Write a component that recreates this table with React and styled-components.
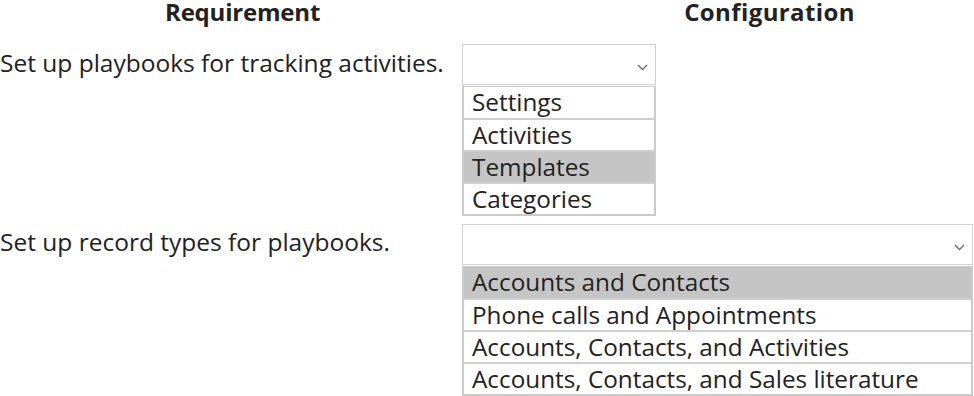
import React from "react";
import styled, { createGlobalStyle } from "styled-components";

const Global = createGlobalStyle`
  html, body { margin: 0; padding: 0; background: #fff; }
  body { font-family: "Open Sans", "Noto Sans", sans-serif; color: #222; }
`;

const Page = styled.div`
  width: 974px;
  display: flex;
  flex-direction: column;
`;

const HeaderRow = styled.div`
  display: flex;
  height: 44px;
  align-items: flex-start;
`;

const HeaderCell = styled.div`
  font-weight: 700;
  font-size: 24px;
  line-height: 26px;
  letter-spacing: ${(p) => p.$spacing}px;
  margin-left: ${(p) => p.$offset}px;
  margin-top: -1px;
  white-space: nowrap;
`;

const Row = styled.div`
  display: grid;
  grid-template-columns: 462px 1fr;
  margin-bottom: ${(p) => p.$gap || 0}px;
`;

const Label = styled.div`
  font-size: 24.5px;
  line-height: 30px;
  padding-top: ${(p) => p.$top}px;
  white-space: nowrap;
`;

const Control = styled.div`
  width: ${(p) => p.$width}px;
  display: flex;
  flex-direction: column;
  gap: 1px;
`;

const Select = styled.div`
  height: ${(p) => p.$height}px;
  border: 1px solid #d2d2d2;
  box-sizing: border-box;
  display: flex;
  align-items: center;
  justify-content: flex-end;
  padding: 5px 7px 0 0;
`;

const List = styled.div`
  border: 2px solid #cbcbcb;
  border-top-width: 1px;
  display: flex;
  flex-direction: column;
`;

const Option = styled.div`
  height: ${(p) => (p.$first ? 31 : 32)}px;
  box-sizing: border-box;
  border-top: ${(p) => (p.$first ? "none" : "2px solid #cfcfcf")};
  background: ${(p) => (p.$selected ? "#c5c5c5" : "#fff")};
  font-size: 24.3px;
  line-height: 29px;
  padding-left: 8px;
  white-space: nowrap;
`;

const Chevron = () => (
  <svg width="11" height="7" viewBox="0 0 11 7">
    <path d="M1 1 L5.5 5.5 L10 1" fill="none" stroke="#6e6e6e" strokeWidth="1.4" />
  </svg>
);

const Dropdown = ({ width, height, options, selected }) => (
  <Control $width={width}>
    <Select $height={height}>
      <Chevron />
    </Select>
    <List>
      {options.map((o, i) => (
        <Option key={o} $first={i === 0} $selected={o === selected}>
          {o}
        </Option>
      ))}
    </List>
  </Control>
);

export default function App() {
  return (
    <Page>
      <Global />
      <HeaderRow>
        <HeaderCell $offset={165} $spacing={-0.2}>Requirement</HeaderCell>
        <HeaderCell $offset={364} $spacing={0.4}>Configuration</HeaderCell>
      </HeaderRow>
      <Row $gap={8}>
        <Label $top={4}>Set up playbooks for tracking activities.</Label>
        <Dropdown
          width={194}
          height={41}
          options={["Settings", "Activities", "Templates", "Categories"]}
          selected="Templates"
        />
      </Row>
      <Row>
        <Label $top={3}>Set up record types for playbooks.</Label>
        <Dropdown
          width={511}
          height={41}
          options={[
            "Accounts and Contacts",
            "Phone calls and Appointments",
            "Accounts, Contacts, and Activities",
            "Accounts, Contacts, and Sales literature",
          ]}
          selected="Accounts and Contacts"
        />
      </Row>
    </Page>
  );
}
